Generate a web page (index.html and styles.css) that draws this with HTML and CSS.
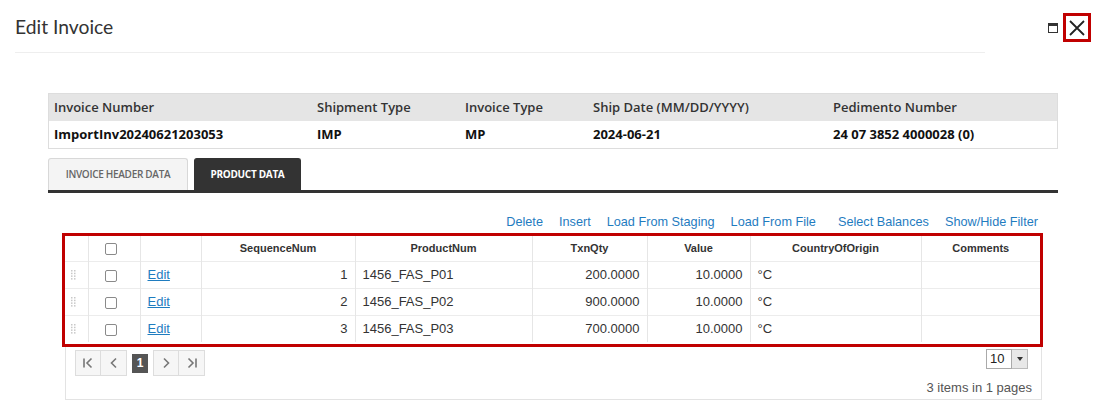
FILE: index.html
```html
<!DOCTYPE html>
<html>
<head>
<meta charset="utf-8">
<link rel="stylesheet" href="styles.css">
</head>
<body>
<div class="dialog">
  <div class="header">
    <div class="title-bar"><h1 class="title">Edit Invoice</h1></div>
    <div class="win-controls">
      <span class="max-icon"></span>
      <span class="close-btn">
        <svg width="18" height="18" viewBox="0 0 18 18"><path d="M2 2 L16 16 M16 2 L2 16" stroke="#222" stroke-width="1.8" fill="none"/></svg>
      </span>
    </div>
  </div>

  <div class="content">
    <div class="info">
      <div class="info-row info-head">
        <div class="c1">Invoice Number</div>
        <div class="c2">Shipment Type</div>
        <div class="c3">Invoice Type</div>
        <div class="c4">Ship Date (MM/DD/YYYY)</div>
        <div class="c5">Pedimento Number</div>
      </div>
      <div class="info-row info-data">
        <div class="c1">ImportInv20240621203053</div>
        <div class="c2">IMP</div>
        <div class="c3">MP</div>
        <div class="c4">2024-06-21</div>
        <div class="c5">24 07 3852 4000028 (0)</div>
      </div>
    </div>

    <div class="tabs">
      <div class="tab">INVOICE HEADER DATA</div>
      <div class="tab active">PRODUCT DATA</div>
    </div>

    <div class="toolbar">
      <a class="tlink">Delete</a>
      <a class="tlink">Insert</a>
      <a class="tlink">Load From Staging</a>
      <a class="tlink">Load From File</a>
      <a class="tlink wide">Select Balances</a>
      <a class="tlink">Show/Hide Filter</a>
    </div>

    <div class="grid">
      <div class="frame">
        <table class="gtable">
          <colgroup>
            <col class="w-drag"><col class="w-chk"><col class="w-edit"><col class="w-seq"><col class="w-prod"><col class="w-qty"><col class="w-val"><col class="w-coo"><col class="w-com">
          </colgroup>
          <thead>
            <tr>
              <th></th>
              <th><span class="chk"></span></th>
              <th></th>
              <th>SequenceNum</th>
              <th>ProductNum</th>
              <th>TxnQty</th>
              <th>Value</th>
              <th>CountryOfOrigin</th>
              <th>Comments</th>
            </tr>
          </thead>
          <tbody>
            <tr>
              <td class="drag"><svg width="5" height="10" viewBox="0 0 5 10"><g fill="#c8c8c8"><rect x="0" y="0" width="1.5" height="1.5"/><rect x="3" y="0" width="1.5" height="1.5"/><rect x="0" y="2.7" width="1.5" height="1.5"/><rect x="3" y="2.7" width="1.5" height="1.5"/><rect x="0" y="5.4" width="1.5" height="1.5"/><rect x="3" y="5.4" width="1.5" height="1.5"/><rect x="0" y="8.1" width="1.5" height="1.5"/><rect x="3" y="8.1" width="1.5" height="1.5"/></g></svg></td>
              <td class="center"><span class="chk"></span></td>
              <td><a class="edit">Edit</a></td>
              <td class="num">1</td>
              <td>1456_FAS_P01</td>
              <td class="num">200.0000</td>
              <td class="num">10.0000</td>
              <td>°C</td>
              <td></td>
            </tr>
            <tr>
              <td class="drag"><svg width="5" height="10" viewBox="0 0 5 10"><g fill="#c8c8c8"><rect x="0" y="0" width="1.5" height="1.5"/><rect x="3" y="0" width="1.5" height="1.5"/><rect x="0" y="2.7" width="1.5" height="1.5"/><rect x="3" y="2.7" width="1.5" height="1.5"/><rect x="0" y="5.4" width="1.5" height="1.5"/><rect x="3" y="5.4" width="1.5" height="1.5"/><rect x="0" y="8.1" width="1.5" height="1.5"/><rect x="3" y="8.1" width="1.5" height="1.5"/></g></svg></td>
              <td class="center"><span class="chk"></span></td>
              <td><a class="edit">Edit</a></td>
              <td class="num">2</td>
              <td>1456_FAS_P02</td>
              <td class="num">900.0000</td>
              <td class="num">10.0000</td>
              <td>°C</td>
              <td></td>
            </tr>
            <tr>
              <td class="drag"><svg width="5" height="10" viewBox="0 0 5 10"><g fill="#c8c8c8"><rect x="0" y="0" width="1.5" height="1.5"/><rect x="3" y="0" width="1.5" height="1.5"/><rect x="0" y="2.7" width="1.5" height="1.5"/><rect x="3" y="2.7" width="1.5" height="1.5"/><rect x="0" y="5.4" width="1.5" height="1.5"/><rect x="3" y="5.4" width="1.5" height="1.5"/><rect x="0" y="8.1" width="1.5" height="1.5"/><rect x="3" y="8.1" width="1.5" height="1.5"/></g></svg></td>
              <td class="center"><span class="chk"></span></td>
              <td><a class="edit">Edit</a></td>
              <td class="num">3</td>
              <td>1456_FAS_P03</td>
              <td class="num">700.0000</td>
              <td class="num">10.0000</td>
              <td>°C</td>
              <td></td>
            </tr>
          </tbody>
        </table>
      </div>

      <div class="pager-area">
        <div class="pager">
          <div class="pgroup">
            <span class="pbtn"><svg width="12" height="12" viewBox="0 0 12 12"><path d="M2 1.5 V10.5 M9.5 1.5 L5 6 L9.5 10.5" stroke="#777" stroke-width="1.6" fill="none"/></svg></span>
            <span class="pbtn"><svg width="12" height="12" viewBox="0 0 12 12"><path d="M8 1.5 L3.5 6 L8 10.5" stroke="#777" stroke-width="1.6" fill="none"/></svg></span>
          </div>
          <span class="pcur">1</span>
          <div class="pgroup">
            <span class="pbtn"><svg width="12" height="12" viewBox="0 0 12 12"><path d="M4 1.5 L8.5 6 L4 10.5" stroke="#777" stroke-width="1.6" fill="none"/></svg></span>
            <span class="pbtn"><svg width="12" height="12" viewBox="0 0 12 12"><path d="M2.5 1.5 L7 6 L2.5 10.5 M10 1.5 V10.5" stroke="#777" stroke-width="1.6" fill="none"/></svg></span>
          </div>
        </div>
        <div class="pager-right">
          <div class="psize">
            <span class="psize-val">10</span>
            <span class="psize-arrow"><svg width="6" height="4" viewBox="0 0 6 4"><path d="M0 0 H6 L3 4 Z" fill="#333"/></svg></span>
          </div>
          <div class="pinfo">3 items in 1 pages</div>
        </div>
      </div>
    </div>
  </div>
</div>
</body>
</html>
```

FILE: styles.css
```css
* { box-sizing: border-box; }
html, body { margin: 0; padding: 0; background: #fff; }
body { width: 1100px; height: 411px; overflow: hidden; font-family: "Liberation Sans", Arial, sans-serif; color: #333; }

.header { display: flex; align-items: flex-start; }
.title-bar { margin-left: 15px; width: 970px; height: 53px; border-bottom: 1px solid #eeeeee; padding-top: 15px; }
.title { margin: 0; font-family: Lato, "Noto Sans", sans-serif; font-weight: 400; font-size: 19.3px; line-height: 24px; color: #333; }

.win-controls { margin-left: auto; margin-right: 9px; margin-top: 13px; display: flex; align-items: center; }
.max-icon { width: 10px; height: 10px; border: 1px solid #333; border-top-width: 3px; margin-right: 5px; }
.close-btn { width: 28px; height: 29px; border: 3px solid #c00000; display: flex; align-items: center; justify-content: center; }

.content { margin-left: 48px; width: 1010px; margin-top: 40px; }

.info { border: 1px solid #dddddd; font-family: "Open Sans", "Noto Sans", sans-serif; font-size: 13px; }
.info-row { display: flex; height: 27px; line-height: 27px; }
.info-head { background: #e5e5e5; font-weight: 600; color: #333; }
.info-data { background: #fff; font-weight: 700; color: #111; }
.info-row div { padding-left: 5px; white-space: nowrap; }
.c1 { width: 263px; }
.c2 { width: 148px; }
.c3 { width: 128px; }
.c4 { width: 240px; }
.c5 { flex: 1; }

.tabs { display: flex; gap: 6px; margin-top: 9px; height: 32px; border-bottom: 3px solid #333; box-sizing: content-box; }
.tab { height: 32px; line-height: 31px; padding: 0; text-align: center; white-space: nowrap; font-family: "Open Sans", "Noto Sans", sans-serif; font-size: 10px; font-weight: 600; letter-spacing: -0.3px; color: #666; background: #f4f4f4; border: 1px solid #d8d8d8; border-bottom: none; border-radius: 3px 3px 0 0; width: 140px; }
.tab.active { background: #333; color: #fff; border-color: #333; font-weight: 700; width: 107px; }

.toolbar { height: 40px; display: flex; justify-content: flex-end; align-items: center; padding-right: 20px; padding-top: 18px; }
.tlink { font-size: 12.7px; color: #1f7cbf; margin-left: 16px; line-height: 16px; }
.tlink.wide { margin-left: 22px; }

.grid { margin-left: 14px; width: 981px; }
.frame { border: 3px solid #c00000; padding-bottom: 2px; }
.gtable { width: 975px; border-collapse: collapse; table-layout: fixed; font-size: 13px; color: #333; }
.w-drag { width: 23px; } .w-chk { width: 52px; } .w-edit { width: 61px; } .w-seq { width: 154px; } .w-prod { width: 177px; }
.w-qty { width: 115px; } .w-val { width: 103px; } .w-coo { width: 171px; } .w-com { width: 119px; }
.gtable th { height: 25px; font-size: 11px; font-weight: 700; text-align: center; border-left: 1px solid #e6e6e6; padding: 0; color: #333; line-height: 14px; }
.gtable td { height: 27px; border-left: 1px solid #e6e6e6; border-top: 1px solid #ececec; padding: 0 7px; white-space: nowrap; line-height: 15px; }
.gtable th:first-child, .gtable td:first-child { border-left: none; }
.gtable td.num { text-align: right; }
.gtable td.center { text-align: center; padding: 0; }
.gtable td.drag { padding: 0 0 0 6px; }
.gtable td.drag svg { display: block; }
.chk { display: inline-block; width: 12px; height: 12px; border: 1px solid #8a8a8a; border-radius: 2px; vertical-align: middle; margin-left: -6px; }
.edit { color: #1f7cbf; text-decoration: underline; }

.pager-area { margin: 0 1px 0 3px; height: 53px; border: 1px solid #e3e3e3; border-top: none; display: flex; justify-content: space-between; }
.pager { display: flex; align-items: center; margin-left: 9px; margin-top: 3px; height: 26px; gap: 5px; }
.pgroup { display: flex; }
.pbtn { width: 26px; height: 26px; border: 1px solid #dddddd; background: #f6f6f6; display: flex; align-items: center; justify-content: center; }
.pbtn + .pbtn { border-left: none; width: 26px; }
.pcur { width: 16px; height: 19px; background: #555; color: #fff; font-size: 12px; font-weight: 700; text-align: center; line-height: 19px; }

.pager-right { display: flex; flex-direction: column; align-items: flex-end; margin-right: 9px; }
.psize { display: flex; margin-top: 2px; height: 20px; margin-right: 4px; }
.psize-val { width: 26px; height: 20px; border: 1px solid #aaa; font-size: 13px; line-height: 18px; padding-left: 3px; color: #222; }
.psize-arrow { width: 16px; height: 20px; border: 1px solid #bbb; border-left: none; background: #e8e8e8; display: flex; align-items: center; justify-content: center; }
.pinfo { margin-top: 11px; font-size: 13px; line-height: 16px; color: #555; }
```
